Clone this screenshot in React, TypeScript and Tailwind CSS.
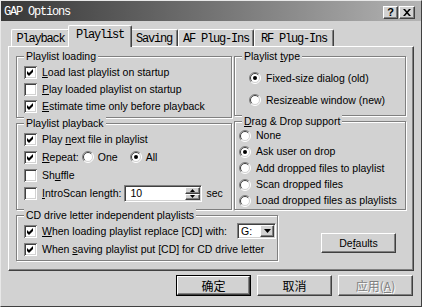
import type React from "react";

function Check({ checked }: { checked?: boolean }) {
  return (
    <svg width="13" height="13" viewBox="0 0 13 13" className="shrink-0">
      <path d="M0 0h13v1H1v12H0z" fill="#808080" />
      <path d="M1 1h11v1H2v10H1z" fill="#404040" />
      <path d="M12 1h1v12H1v-1h11z" fill="#fff" />
      <path d="M11 2h1v10H2v-1h9z" fill="#d2d2d2" />
      <rect x="2" y="2" width="9" height="9" fill="#fff" />
      {checked && <path d="M3 5l2 2 4-4v3l-4 4-2-2z" fill="#000" />}
    </svg>
  );
}

function Radio({ on }: { on?: boolean }) {
  return (
    <svg width="12" height="12" viewBox="0 0 12 12" className="shrink-0">
      <circle cx="6" cy="6" r="5" fill="#fff" />
      <path d="M9.9 2.1A5.5 5.5 0 0 0 2.1 9.9" fill="none" stroke="#808080" />
      <path d="M9.2 2.8A4.5 4.5 0 0 0 2.8 9.2" fill="none" stroke="#404040" />
      <path d="M9.9 2.1A5.5 5.5 0 0 1 2.1 9.9" fill="none" stroke="#fff" />
      <path d="M9.2 2.8A4.5 4.5 0 0 1 2.8 9.2" fill="none" stroke="#d2d2d2" />
      {on && <circle cx="6" cy="6" r="2" fill="#000" />}
    </svg>
  );
}

function Group({
  title,
  className,
  children,
}: {
  title: React.ReactNode;
  className: string;
  children: React.ReactNode;
}) {
  return (
    <div
      className={`border border-[#808080] shadow-[inset_1px_1px_0_#fff,1px_1px_0_#fff] ${className}`}
    >
      <div className="-mt-[7px] ml-[7px] w-fit bg-[#d2d2d2] px-[2px] leading-[13px]">
        {title}
      </div>
      {children}
    </div>
  );
}

function CheckRow({
  checked,
  className,
  children,
}: {
  checked?: boolean;
  className: string;
  children: React.ReactNode;
}) {
  return (
    <div className={`flex items-center pl-[7px] ${className}`}>
      <Check checked={checked} />
      <span className="ml-[5px] whitespace-nowrap">{children}</span>
    </div>
  );
}

function RadioRow({
  on,
  className,
  children,
}: {
  on?: boolean;
  className: string;
  children: React.ReactNode;
}) {
  return (
    <div className={`flex items-center ${className}`}>
      <Radio on={on} />
      <span className="ml-[5px] whitespace-nowrap">{children}</span>
    </div>
  );
}

function Tab({ children, className }: { children: React.ReactNode; className: string }) {
  return (
    <div
      className={`flex items-center justify-center rounded-t-[2px] border-t border-l border-r border-t-white border-l-white border-r-[#404040] bg-[#d2d2d2] shadow-[inset_-1px_0_0_#808080] ${className}`}
    >
      {children}
    </div>
  );
}

function Btn({
  children,
  disabled,
  className,
}: {
  children: React.ReactNode;
  disabled?: boolean;
  className: string;
}) {
  return (
    <div
      className={`flex items-center justify-center border border-t-white border-l-white border-r-[#404040] border-b-[#404040] bg-[#d2d2d2] shadow-[inset_-1px_-1px_0_#808080] ${className} ${
        disabled ? "text-[#808080] [text-shadow:1px_1px_0_#fff]" : ""
      }`}
    >
      {children}
    </div>
  );
}

const Tri = ({ up }: { up?: boolean }) => (
  <svg width="7" height="4" viewBox="0 0 7 4">
    <path d={up ? "M3.5 0L7 4H0z" : "M0 0h7L3.5 4z"} fill="#000" />
  </svg>
);

export default function App() {
  return (
    <div className="h-[307px] w-[422px] overflow-hidden border border-t-[#e8e8e8] border-l-[#e8e8e8] border-r-[#404040] border-b-[#404040] bg-[#d2d2d2] font-['Liberation_Sans',Arial,sans-serif] text-[10.5px] leading-[13px] text-black">
      {/* title bar */}
      <div className="flex h-[20px] items-center justify-between bg-linear-to-r from-[#383838] to-[#b4b4b4] pl-[3px] pr-[6px]">
        <span className="mt-[2px] font-['Liberation_Mono',monospace] text-[12px] tracking-[-1.2px] text-white">
          GAP Options
        </span>
        <div className="mt-[2px] flex gap-[1px]">
          <Btn className="h-[13px] w-[15px] text-[11px] font-bold">?</Btn>
          <Btn className="h-[13px] w-[16px]">
            <svg width="8" height="7" viewBox="0 0 8 7">
              <path d="M0 0h2l2 2.3L6 0h2L5 3.5 8 7H6L4 4.7 2 7H0l3-3.5z" fill="#000" />
            </svg>
          </Btn>
        </div>
      </div>

      {/* tabs */}
      <div className="flex h-[25px] items-end pl-[10px] font-['Liberation_Mono',monospace] text-[12px] tracking-[-1.2px]">
        <Tab className="h-[17px] w-[59px] pt-[2px]">Playback</Tab>
        <Tab className="relative z-10 -mx-[2px] -mb-[1px] h-[22px] w-[64px] pb-[2px]">Playlist</Tab>
        <Tab className="h-[17px] w-[48px] pt-[2px]">Saving</Tab>
        <Tab className="h-[17px] w-[76px] pt-[2px]">AF Plug-Ins</Tab>
        <Tab className="h-[17px] w-[80px] pt-[2px]">RF Plug-Ins</Tab>
      </div>

      {/* page */}
      <div className="mx-[7px] h-[225px] border border-t-white border-l-white border-r-[#404040] border-b-[#404040] pt-[9px] pl-[7px] shadow-[inset_-1px_-1px_0_#808080]">
        <div className="flex h-[154px] gap-[2px]">
          <div className="flex w-[216px] flex-col">
            <Group title="Playlist loading" className="h-[62px] pt-0">
              <CheckRow checked className="mt-[1px] h-[17px]">
                <u>L</u>oad last playlist on startup
              </CheckRow>
              <CheckRow className="h-[17px]">
                <u>P</u>lay loaded playlist on startup
              </CheckRow>
              <CheckRow checked className="h-[17px]">
                <u>E</u>stimate time only before playback
              </CheckRow>
            </Group>
            <Group title="Playlist playback" className="mt-[5px] h-[87px]">
              <CheckRow checked className="h-[18px]">
                Play <u>n</u>ext file in playlist
              </CheckRow>
              <div className="flex h-[18px] items-center pl-[7px]">
                <Check checked />
                <span className="ml-[5px]">
                  <u>R</u>epeat:
                </span>
                <span className="ml-[3px] flex items-center">
                  <Radio />
                  <span className="ml-[4px]">One</span>
                </span>
                <span className="ml-[12px] flex items-center">
                  <Radio on />
                  <span className="ml-[4px]">All</span>
                </span>
              </div>
              <CheckRow className="h-[18px]">
                Sh<u>u</u>ffle
              </CheckRow>
              <div className="flex h-[18px] items-center pl-[7px]">
                <Check />
                <span className="ml-[5px] whitespace-nowrap">
                  <u>I</u>ntroScan length:
                </span>
                <div className="ml-[3px] flex h-[17px] w-[78px] items-center border border-t-[#808080] border-l-[#808080] border-r-white border-b-white bg-white pl-[5px] shadow-[inset_1px_1px_0_#404040,inset_-1px_-1px_0_#d2d2d2]">
                  <span className="flex-1">10</span>
                  <div className="mr-[1px] flex h-[13px] w-[15px] flex-col">
                    <Btn className="h-[7px] w-full">
                      <svg width="5" height="3" viewBox="0 0 5 3">
                        <path d="M2.5 0L5 3H0z" fill="#000" />
                      </svg>
                    </Btn>
                    <Btn className="h-[6px] w-full">
                      <svg width="5" height="3" viewBox="0 0 5 3">
                        <path d="M0 0h5L2.5 3z" fill="#000" />
                      </svg>
                    </Btn>
                  </div>
                </div>
                <span className="ml-[4px]">sec</span>
              </div>
            </Group>
          </div>

          <div className="flex w-[172px] flex-col">
            <Group
              title={
                <>
                  Playlist <u>t</u>ype
                </>
              }
              className="h-[62px]"
            >
              <RadioRow on className="mt-[4px] h-[22px] pl-[14px]">
                Fixed-size dialog (old)
              </RadioRow>
              <RadioRow className="h-[22px] pl-[14px]">Resizeable window (new)</RadioRow>
            </Group>
            <Group
              title={
                <>
                  <u>D</u>rag &amp; Drop support
                </>
              }
              className="mt-[5px] h-[90px]"
            >
              <RadioRow className="h-[16.3px] pl-[4px]">None</RadioRow>
              <RadioRow on className="h-[16.3px] pl-[4px]">
                Ask user on drop
              </RadioRow>
              <RadioRow className="h-[16.3px] pl-[4px]">Add dropped files to playlist</RadioRow>
              <RadioRow className="h-[16.3px] pl-[4px]">Scan dropped files</RadioRow>
              <RadioRow className="h-[16.3px] pl-[4px]">Load dropped files as playlists</RadioRow>
            </Group>
          </div>
        </div>

        <div className="mt-[5px] flex items-start">
          <Group title="CD drive letter independent playlists" className="h-[46px] w-[262px]">
            <div className="flex h-[18px] items-center pl-[7px]">
              <Check checked />
              <span className="ml-[5px] whitespace-nowrap">
                <u>W</u>hen loading playlist replace [CD] with:
              </span>
              <div className="mr-[1px] ml-auto flex h-[16px] w-[39px] items-center border border-t-[#808080] border-l-[#808080] border-r-white border-b-white bg-white pl-[3px] shadow-[inset_1px_1px_0_#404040,inset_-1px_-1px_0_#d2d2d2]">
                <span className="flex-1">G:</span>
                <Btn className="mr-[1px] h-[12px] w-[14px]">
                  <Tri />
                </Btn>
              </div>
            </div>
            <CheckRow checked className="h-[18px]">
              When <u>s</u>aving playlist put [CD] for CD drive letter
            </CheckRow>
          </Group>
          <Btn className="mt-[18px] ml-[43px] h-[20px] w-[75px]">
            <span>
              De<u>f</u>aults
            </span>
          </Btn>
        </div>
      </div>

      {/* dialog buttons */}
      <div className="mt-[4px] flex justify-end gap-[6px] pr-[8px] font-['Noto_Sans_CJK_SC','Liberation_Sans',sans-serif] text-[12px]">
        <div className="h-[21px] w-[75px] border border-black">
          <Btn className="h-full w-full">确定</Btn>
        </div>
        <Btn className="h-[21px] w-[75px]">取消</Btn>
        <Btn disabled className="h-[21px] w-[75px]">
          <span>
            应用(<u>A</u>)
          </span>
        </Btn>
      </div>
    </div>
  );
}
